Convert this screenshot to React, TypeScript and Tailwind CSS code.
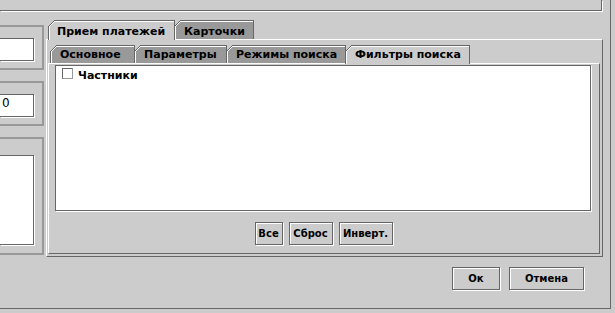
import type { ReactElement } from "react";

// pixel corner of a Metal-style tab: bg triangle, dark slant, white highlight
function Corner({ first }: { first: boolean }) {
  const px: ReactElement[] = [];
  for (let i = first ? 0 : 1; i < 7; i++) {
    for (let j = 0; j < 7; j++) {
      const s = i + j;
      let fill = "";
      if (s < 6) fill = "#cccccc";
      else if (s === 6) fill = "#666666";
      else if (s === 7 && i >= 1 && j >= 1) fill = "#ffffff";
      if (fill)
        px.push(<rect key={`${i}-${j}`} x={i} y={j} width={1} height={1} fill={fill} />);
    }
  }
  return (
    <svg
      className="absolute -left-px -top-px"
      width={7}
      height={7}
      shapeRendering="crispEdges"
    >
      {px}
    </svg>
  );
}

interface TabProps {
  label: string;
  className: string;
  selected?: boolean;
  first?: boolean;
}

function Tab({ label, className, selected = false, first = false }: TabProps) {
  return (
    <div
      className={`relative shrink-0 border-l border-t border-r border-[#666] shadow-[inset_1px_1px_0_#fff] text-[11px] leading-[13px] font-bold whitespace-nowrap text-black ${
        first ? "" : "-ml-px"
      } ${selected ? "z-10 bg-[#cccccc]" : "bg-[#999999]"} ${className}`}
    >
      <Corner first={first} />
      {label}
    </div>
  );
}

function Btn({ label, className }: { label: string; className: string }) {
  return (
    <div
      className={`h-[23px] border border-[#666] shadow-[inset_1px_1px_0_#fff,1px_1px_0_#fff] pt-px text-center text-[10px] leading-[20px] font-bold text-black whitespace-nowrap ${className}`}
    >
      {label}
    </div>
  );
}

export default function App() {
  return (
    <div className="w-[615px] h-[313px] overflow-hidden bg-[#cccccc] font-['DejaVu_Sans',sans-serif] text-black">
      <div className="w-[611px] h-[309px] border-r border-b border-[#666] flex flex-col">
        {/* top panel edge */}
        <div className="w-[602px] h-[11px] shrink-0 border-b border-r border-[#666] shadow-[1px_1px_0_#fff]" />

        <div className="flex mt-px">
          {/* left column, cut off by the split */}
          <div className="w-[44px] pt-[13px] flex flex-col gap-[11px]">
            <div className="h-[45px] border-t-2 border-r-2 border-b-2 border-[#999] pt-[11px]">
              <div className="w-[34px] h-[23px] border-t border-r border-b border-[#666] bg-white shadow-[1px_1px_0_#fff]" />
            </div>
            <div className="h-[45px] border-t-2 border-r-2 border-b-2 border-[#999] pt-[11px]">
              <div className="w-[34px] h-[23px] border-t border-r border-b border-[#666] bg-white shadow-[1px_1px_0_#fff] pl-[2px] pt-px text-[12px] leading-[14px]">
                0
              </div>
            </div>
            <div className="h-[118px] border-t-2 border-r-2 border-b-2 border-[#999] pt-[16px]">
              <div className="w-[34px] h-[90px] border-t border-r border-b border-[#666] bg-white shadow-[1px_1px_0_#fff]" />
            </div>
          </div>

          {/* outer tabbed pane */}
          <div className="w-[557px] ml-[2px] mt-[8px]">
            <div className="flex h-[19px] items-start pl-[2px]">
              <Tab label="Прием платежей" first selected className="w-[127px] h-[20px] pl-[8px] pt-[4px]" />
              <Tab label="Карточки" className="w-[80px] h-[19px] pl-[9px] pt-[4px]" />
            </div>
            <div className="h-[218px] border border-t-white border-l-white border-r-[#666] border-b-[#666] pl-px pt-px pr-[2px] pb-[2px]">
              {/* inner tabbed pane */}
              <div className="flex flex-col h-full">
                <div className="flex h-[22px] shrink-0 items-start pt-[4px] pl-[2px]">
                  <Tab label="Основное" first className="w-[85px] h-[18px] pl-[9px] pt-[2px]" />
                  <Tab label="Параметры" className="w-[93px] h-[18px] pl-[9px] pt-[2px]" />
                  <Tab label="Режимы поиска" className="w-[120px] h-[18px] pl-[9px] pt-[2px]" />
                  <Tab label="Фильтры поиска" selected className="w-[125px] h-[19px] pl-[9px] pt-[2px]" />
                </div>
                <div className="flex-1 border border-t-white border-l-white border-r-[#666] border-b-[#666] pl-px pt-px pr-[2px] pb-[2px]">
                  <div className="px-[5px] flex flex-col">
                    <div className="w-[536px] h-[146px] border border-[#666] bg-white shadow-[1px_1px_0_#fff]">
                      <div className="flex items-start mt-[2px] ml-[6px] gap-[5px]">
                        <div className="w-[11px] h-[11px] border border-t-[#666] border-l-[#666] border-r-[#999] border-b-[#999] bg-white" />
                        <span className="mt-px text-[11px] leading-[13px] font-bold">Частники</span>
                      </div>
                    </div>
                    <div className="flex justify-center gap-[6px] mt-[11px]">
                      <Btn label="Все" className="w-[28px]" />
                      <Btn label="Сброс" className="w-[44px]" />
                      <Btn label="Инверт." className="w-[54px]" />
                    </div>
                  </div>
                </div>
              </div>
            </div>
          </div>
        </div>

        {/* dialog buttons */}
        <div className="flex justify-end gap-[9px] pr-[26px] mt-[10px]">
          <Btn label="Ок" className="w-[48px]" />
          <Btn label="Отмена" className="w-[75px]" />
        </div>
      </div>
    </div>
  );
}
